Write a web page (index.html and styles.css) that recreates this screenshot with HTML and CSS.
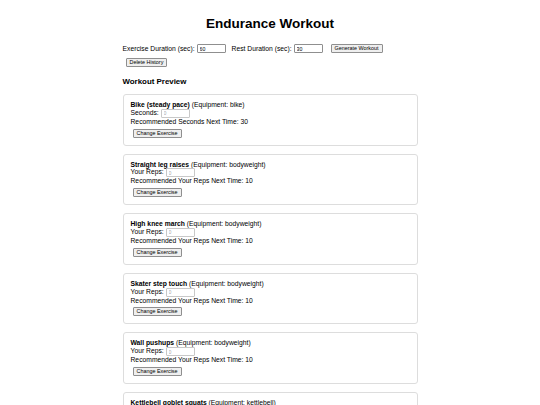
FILE: index.html
```html
<!DOCTYPE html>
<html>
<head>
    <meta charset="UTF-8">
    <title>Endurance Workout</title>
    <link rel="stylesheet" href="styles.css">
</head>
<body>
<div class="container">
    <h1>Endurance Workout</h1>

    <div class="controls">
        <label for="exercise-duration">Exercise Duration (sec):</label>
        <input type="number" id="exercise-duration" value="60">
        <label for="rest-duration" class="gap">Rest Duration (sec):</label>
        <input type="number" id="rest-duration" value="30">
        <button id="generate" class="gap-btn">Generate Workout</button>
    </div>
    <div class="history">
        <button id="delete-history">Delete History</button>
    </div>

    <h3>Workout Preview</h3>

    <div id="preview">
        <div class="exercise">
            <div><b>Bike (steady pace)</b> (Equipment: bike)</div>
            <div>Seconds: <input type="number" placeholder="0"></div>
            <div>Recommended Seconds Next Time: 30</div>
            <button>Change Exercise</button>
        </div>
        <div class="exercise">
            <div><b>Straight leg raises</b> (Equipment: bodyweight)</div>
            <div>Your Reps: <input type="number" placeholder="0"></div>
            <div>Recommended Your Reps Next Time: 10</div>
            <button>Change Exercise</button>
        </div>
        <div class="exercise">
            <div><b>High knee march</b> (Equipment: bodyweight)</div>
            <div>Your Reps: <input type="number" placeholder="0"></div>
            <div>Recommended Your Reps Next Time: 10</div>
            <button>Change Exercise</button>
        </div>
        <div class="exercise">
            <div><b>Skater step touch</b> (Equipment: bodyweight)</div>
            <div>Your Reps: <input type="number" placeholder="0"></div>
            <div>Recommended Your Reps Next Time: 10</div>
            <button>Change Exercise</button>
        </div>
        <div class="exercise">
            <div><b>Wall pushups</b> (Equipment: bodyweight)</div>
            <div>Your Reps: <input type="number" placeholder="0"></div>
            <div>Recommended Your Reps Next Time: 10</div>
            <button>Change Exercise</button>
        </div>
        <div class="exercise">
            <div><b>Kettlebell goblet squats</b> (Equipment: kettlebell)</div>
            <div>Your Reps: <input type="number" placeholder="0"></div>
            <div>Recommended Your Reps Next Time: 10</div>
            <button>Change Exercise</button>
        </div>
    </div>
</div>
</body>
</html>
```

FILE: styles.css
```css
body {
    margin: 0;
    font-family: "Liberation Sans", Arial, sans-serif;
    font-size: 6.75px;
    color: #000;
    background: #fff;
}

.container {
    width: 295px;
    margin: 0 auto;
}

h1 {
    font-size: 13.5px;
    line-height: 16px;
    text-align: center;
    margin: 16px 0 0;
}

.controls {
    display: flex;
    align-items: center;
    height: 9px;
    margin-top: 12px;
}

.controls label {
    margin-right: 2px;
}

.controls .gap {
    margin-left: 6px;
}

.controls .gap-btn {
    margin-left: 8px;
}

.history {
    margin: 5px 0 0 3px;
    height: 9px;
    display: flex;
    align-items: center;
}

input[type=number] {
    width: 29px;
    height: 9px;
    box-sizing: border-box;
    padding: 0 2px;
    border: 1px solid #8f8f8f;
    border-radius: 1px;
    font-family: "Liberation Sans", Arial, sans-serif;
    font-size: 5.2px;
    vertical-align: middle;
    -moz-appearance: textfield;
}

input[type=number]::-webkit-inner-spin-button,
input[type=number]::-webkit-outer-spin-button {
    -webkit-appearance: none;
    margin: 0;
}

.exercise input[type=number] {
    border-color: #c8c8c8;
}

input::placeholder {
    color: #aaa;
}

button {
    font-family: "Liberation Sans", Arial, sans-serif;
    font-size: 5.4px;
    height: 9px;
    line-height: 7px;
    padding: 0 3px;
    background-color: #efefef;
    border: 1px solid #8f8f8f;
    border-radius: 1px;
    color: #000;
    cursor: pointer;
}

h3 {
    font-size: 7.9px;
    line-height: 9px;
    margin: 10px 0 8px;
}

.exercise {
    border: 1px solid #ddd;
    border-radius: 3px;
    padding: 6px 7px 7px;
    margin-bottom: 8px;
    line-height: 7.8px;
}

.exercise button {
    margin: 3px 0 0 2px;
}
```
